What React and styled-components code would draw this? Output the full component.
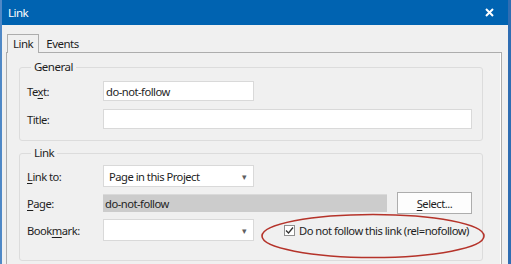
import React from 'react';
import styled, { createGlobalStyle } from 'styled-components';

const GlobalStyle = createGlobalStyle`
  html, body {
    margin: 0;
    padding: 0;
    background: #f0f0f0;
  }
  body {
    font-family: "Noto Sans", "Open Sans", sans-serif;
    font-size: 11.2px;
    letter-spacing: -0.5px;
    color: #1e1e1e;
  }
`;

const App = () => {
  return (
    <>
      <GlobalStyle />
      <Window>
        <TitleBar>
          <span>Link</span>
          <CloseIcon width="9" height="9" viewBox="0 0 9 9">
            <path d="M1 1L8 8M8 1L1 8" stroke="#fff" strokeWidth="2" />
          </CloseIcon>
        </TitleBar>
        <Body>
          <TabStrip>
            <Tab active>Link</Tab>
            <Tab>Events</Tab>
          </TabStrip>
          <Panel>
            <Group>
              <Legend>General</Legend>
              <Row>
                <Label>Te<u>x</u>t:</Label>
                <TextBox width={151} value="do-not-follow" readOnly />
              </Row>
              <Row>
                <Label>Title:</Label>
                <TextBox width={369} value="" readOnly />
              </Row>
            </Group>

            <LinkGroup>
              <Legend>Link</Legend>
              <Row tall>
                <Label><u>L</u>ink to:</Label>
                <Dropdown>
                  <span>Page in this Project</span>
                  <Arrow>▾</Arrow>
                </Dropdown>
              </Row>
              <Row tall>
                <Label><u>P</u>age:</Label>
                <ReadOnlyField>do-not-follow</ReadOnlyField>
                <Button><u>S</u>elect...</Button>
              </Row>
              <Row tall>
                <Label>Book<u>m</u>ark:</Label>
                <Dropdown>
                  <span></span>
                  <Arrow>▾</Arrow>
                </Dropdown>
                <CheckLabel>
                  <CheckBox>
                    <svg width="9" height="9" viewBox="0 0 9 9">
                      <path d="M1 4.5L3.5 7L8 1.5" fill="none" stroke="#333" strokeWidth="1.3" />
                    </svg>
                  </CheckBox>
                  Do not follow this link (rel=nofollow)
                </CheckLabel>
              </Row>
              <Highlight width="226" height="46" viewBox="0 0 226 46">
                <ellipse cx="113" cy="23" rx="111" ry="21.5" fill="none" stroke="#b5332a" strokeWidth="1.6" />
              </Highlight>
            </LinkGroup>
          </Panel>
        </Body>
      </Window>
    </>
  );
};

const Window = styled.div`
  width: 511px;
  height: 264px;
  box-sizing: border-box;
  border-left: 2px solid #4f88c6;
  border-right: 3px solid #2f6db3;
  overflow: hidden;
  background: #f0f0f0;
`;

const TitleBar = styled.div`
  height: 25px;
  margin-left: -2px;
  margin-right: -3px;
  padding: 0 17px 0 8px;
  background: #0063b1;
  color: #fff;
  display: flex;
  align-items: center;
  justify-content: space-between;
  font-size: 11.5px;
`;

const CloseIcon = styled.svg`
  display: block;
`;

const Body = styled.div`
  padding: 9px 6px 0 4px;
`;

const TabStrip = styled.div`
  display: flex;
  align-items: flex-end;
  height: 18px;
  padding-left: 1px;
`;

const Tab = styled.div`
  height: ${p => (p.active ? '19px' : '17px')};
  box-sizing: border-box;
  padding: ${p => (p.active ? '1px 5px 0 5px' : '0 6px 0 6px')};
  border: 1px solid ${p => (p.active ? '#adadad' : 'transparent')};
  border-bottom: none;
  background: #f0f0f0;
  margin-bottom: ${p => (p.active ? '-1px' : '0')};
  position: relative;
  z-index: 1;
  line-height: 16px;
  font-size: 11.5px;
`;

const Panel = styled.div`
  border: 1px solid #adadad;
  box-shadow: inset -1px 0 0 #fff;
  padding: 6px 18px 0 12px;
  height: 240px;
  box-sizing: border-box;
`;

const Group = styled.fieldset`
  margin: 0;
  border: 1px solid #dcdcdc;
  border-radius: 3px;
  padding: 6px 8px 11px 7px;
  display: flex;
  flex-direction: column;
  gap: 8px;
`;

const LinkGroup = styled(Group)`
  position: relative;
  margin-top: 4px;
  gap: 5px;
  padding-top: 4px;
  padding-bottom: 19px;
`;

const Legend = styled.legend`
  padding: 0 3px;
  margin-left: 4px;
  line-height: 16px;
  font-size: 11.5px;
`;

const Row = styled.div`
  display: flex;
  align-items: center;
  height: ${p => (p.tall ? '22px' : '20px')};
`;

const Label = styled.div`
  width: 76px;
  flex-shrink: 0;
  u {
    text-decoration-thickness: 1px;
    text-underline-offset: 2px;
  }
`;

const TextBox = styled.input`
  width: ${p => p.width}px;
  height: 20px;
  box-sizing: border-box;
  border: 1px solid #d9d9d9;
  background: #fff;
  font: inherit;
  letter-spacing: inherit;
  color: #1e1e1e;
  padding: 0 2px;
  outline: none;
`;

const Dropdown = styled.div`
  width: 151px;
  height: 22px;
  box-sizing: border-box;
  border: 1px solid #d9d9d9;
  background: #fff;
  display: flex;
  align-items: center;
  justify-content: space-between;
  padding: 0 7px 0 5px;
`;

const Arrow = styled.span`
  font-size: 9px;
  color: #606060;
`;

const ReadOnlyField = styled.div`
  width: 284px;
  height: 18px;
  box-sizing: border-box;
  background: #cccccc;
  border-top: 1px solid #dadada;
  padding: 0 2px;
  display: flex;
  align-items: center;
`;

const Button = styled.div`
  margin-left: 10px;
  width: 75px;
  height: 22px;
  box-sizing: border-box;
  border: 1px solid #adadad;
  background: #fdfdfd;
  display: flex;
  align-items: center;
  justify-content: center;
  u {
    text-underline-offset: 2px;
  }
`;

const CheckLabel = styled.label`
  margin-left: 30px;
  display: flex;
  align-items: center;
  gap: 4px;
  white-space: nowrap;
`;

const CheckBox = styled.span`
  width: 11px;
  height: 11px;
  box-sizing: border-box;
  border: 1px solid #8f8f8f;
  background: #fff;
  display: flex;
  align-items: center;
  justify-content: center;
`;

const Highlight = styled.svg`
  position: absolute;
  left: 240px;
  top: 52px;
  pointer-events: none;
`;

export default App;
